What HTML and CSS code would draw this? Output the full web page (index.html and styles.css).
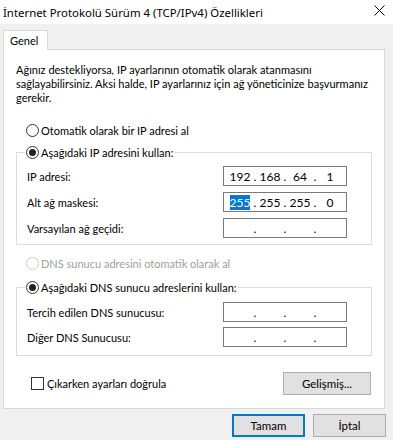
FILE: index.html
```html
<!DOCTYPE html>
<html>
<head>
  <title>Internet Protokolü Sürüm 4 (TCP/IPv4) Özellikleri</title>
  <link rel="stylesheet" href="styles.css">
</head>
<body>

  <div class="titlebar">
    <span class="title">İnternet Protokolü Sürüm 4 (TCP/IPv4) Özellikleri</span>
    <svg class="close" width="11" height="11" viewBox="0 0 11 11">
      <path d="M0.5 0.5 L10.5 10.5 M10.5 0.5 L0.5 10.5" stroke="#000" stroke-width="1" fill="none"/>
    </svg>
  </div>

  <div class="tabs">
    <div class="tab">Genel</div>
  </div>

  <div class="panel">
    <p class="intro">Ağınız destekliyorsa, IP ayarlarının otomatik olarak atanmasını<br>sağlayabilirsiniz. Aksi halde, IP ayarlarınız için ağ yöneticinize başvurmanız<br>gerekir.</p>

    <div class="option first"><span class="radio"></span>Otomatik olarak bir IP adresi al</div>

    <fieldset class="group ip-group">
      <legend><span class="option"><span class="radio checked"></span>Aşağıdaki IP adresini kullan:</span></legend>
      <div class="row">
        <span>IP adresi:</span>
        <div class="ipbox">
          <span class="seg">192</span><span class="dot">.</span><span class="seg">168</span><span class="dot">.</span><span class="seg">64</span><span class="dot">.</span><span class="seg">1</span>
        </div>
      </div>
      <div class="row">
        <span>Alt ağ maskesi:</span>
        <div class="ipbox">
          <span class="seg"><span class="sel">255</span></span><span class="dot">.</span><span class="seg">255</span><span class="dot">.</span><span class="seg">255</span><span class="dot">.</span><span class="seg">0</span>
        </div>
      </div>
      <div class="row">
        <span>Varsayılan ağ geçidi:</span>
        <div class="ipbox">
          <span class="seg"></span><span class="dot">.</span><span class="seg"></span><span class="dot">.</span><span class="seg"></span><span class="dot">.</span><span class="seg"></span>
        </div>
      </div>
    </fieldset>

    <div class="option disabled dns-auto"><span class="radio"></span>DNS sunucu adresini otomatik olarak al</div>

    <fieldset class="group dns-group">
      <legend><span class="option"><span class="radio checked"></span>Aşağıdaki DNS sunucu adreslerini kullan:</span></legend>
      <div class="row">
        <span>Tercih edilen DNS sunucusu:</span>
        <div class="ipbox">
          <span class="seg"></span><span class="dot">.</span><span class="seg"></span><span class="dot">.</span><span class="seg"></span><span class="dot">.</span><span class="seg"></span>
        </div>
      </div>
      <div class="row">
        <span>Diğer DNS Sunucusu:</span>
        <div class="ipbox">
          <span class="seg"></span><span class="dot">.</span><span class="seg"></span><span class="dot">.</span><span class="seg"></span><span class="dot">.</span><span class="seg"></span>
        </div>
      </div>
    </fieldset>

    <div class="bottom">
      <div class="option"><span class="check"></span>Çıkarken ayarları doğrula</div>
      <button class="btn advanced">Gelişmiş...</button>
    </div>
  </div>

  <div class="footer">
    <button class="btn default">Tamam</button>
    <button class="btn">İptal</button>
  </div>

</body>
</html>
```

FILE: styles.css
```css
body {
  margin: 0;
  width: 393px;
  height: 440px;
  background-color: #f0f0f0;
  font-family: Lato, "Noto Sans", sans-serif;
  font-size: 11px;
  color: #000;
  overflow: hidden;
}

.titlebar {
  height: 24px;
  background-color: #fff;
  display: flex;
  align-items: center;
  justify-content: space-between;
  padding: 0 8px 0 3px;
}

.title {
  font-family: "Noto Sans", sans-serif;
  font-size: 11.4px;
  white-space: nowrap;
}

.close {
  margin-top: -4px;
}

.tabs {
  padding: 6px 0 0 3px;
  display: flex;
}

.tab {
  width: 45px;
  height: 20px;
  box-sizing: border-box;
  padding-left: 6px;
  line-height: 19px;
  background-color: #fff;
  border: 1px solid #d9d9d9;
  border-bottom: none;
  margin-bottom: -1px;
  position: relative;
  z-index: 1;
}

.panel {
  margin-left: 3px;
  width: 382px;
  height: 360px;
  box-sizing: border-box;
  background-color: #fff;
  border: 1px solid #d9d9d9;
  padding: 0 12px;
}

.intro {
  margin: 13px 0 0 0;
  line-height: 14px;
  white-space: nowrap;
}

.option {
  display: flex;
  align-items: center;
  height: 16px;
  white-space: nowrap;
}

.option.first {
  margin: 17px 0 0 10px;
}

.option.disabled {
  color: #a0a0a0;
}

.dns-auto {
  margin: 10px 0 0 10px;
}

.radio {
  width: 13px;
  height: 13px;
  box-sizing: border-box;
  border: 1px solid #333;
  border-radius: 50%;
  margin-right: 2px;
  display: flex;
  align-items: center;
  justify-content: center;
}

.radio.checked::after {
  content: "";
  width: 7px;
  height: 7px;
  border-radius: 50%;
  background-color: #222;
}

.disabled .radio {
  border-color: #cccccc;
}

.check {
  width: 13px;
  height: 13px;
  box-sizing: border-box;
  border: 1px solid #333;
  margin-right: 3px;
}

.group {
  margin: 6px 0 0 0;
  padding: 0 24px 6px 10px;
  border: 1px solid #dcdcdc;
  min-width: 0;
}

.group legend {
  margin-left: -2px;
  padding: 0 1px;
}

.ip-group .row:first-of-type {
  margin-top: 6px;
}

.dns-group {
  margin-top: 8px;
  padding-bottom: 8px;
}

.dns-group .row:first-of-type {
  margin-top: 7px;
}

.row {
  display: flex;
  justify-content: space-between;
  align-items: center;
  height: 20px;
  margin-top: 6px;
}

.dns-group .row {
  margin-top: 5px;
}

.ipbox {
  width: 124px;
  height: 20px;
  box-sizing: border-box;
  border: 1px solid #7a7a7a;
  display: flex;
  align-items: center;
  padding-left: 3px;
  font-size: 12px;
}

.seg {
  width: 26px;
  text-align: center;
}

.dot {
  width: 4px;
  text-align: center;
}

.sel {
  background-color: #0078d7;
  color: #fff;
}

.bottom {
  margin-top: 16px;
  padding: 0 1px 0 15px;
  display: flex;
  justify-content: space-between;
  align-items: center;
}

.btn {
  font-family: Lato, "Noto Sans", sans-serif;
  font-size: 11.5px;
  color: #000;
  height: 23px;
  width: 73px;
  box-sizing: border-box;
  background-color: #e1e1e1;
  border: 1px solid #adadad;
  padding: 0;
}

.btn.advanced {
  width: 88px;
}

.btn.default {
  border: 2px solid #0078d7;
}

.footer {
  display: flex;
  justify-content: flex-end;
  gap: 8px;
  padding: 5px 7px 0 0;
}
```
